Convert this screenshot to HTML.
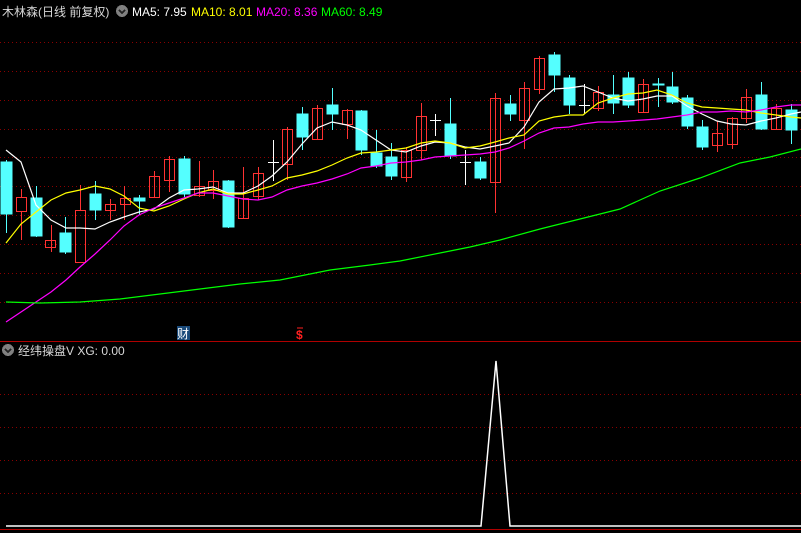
<!DOCTYPE html>
<html><head><meta charset="utf-8"><style>
html,body{margin:0;padding:0;background:#000;width:801px;height:533px;overflow:hidden}
svg{display:block}
text{font-family:"Liberation Sans","Noto Sans CJK SC",sans-serif;font-size:12px}
</style></head><body>
<svg width="801" height="533" viewBox="0 0 801 533" xmlns="http://www.w3.org/2000/svg" shape-rendering="crispEdges">
<rect width="801" height="533" fill="#000"/>
<g stroke="#8a0000" stroke-dasharray="1 3" stroke-width="1">
<line x1="0" y1="42.5" x2="801" y2="42.5"/><line x1="0" y1="71.5" x2="801" y2="71.5"/><line x1="0" y1="100.5" x2="801" y2="100.5"/><line x1="0" y1="129.5" x2="801" y2="129.5"/><line x1="0" y1="157.5" x2="801" y2="157.5"/><line x1="0" y1="186.5" x2="801" y2="186.5"/><line x1="0" y1="215.5" x2="801" y2="215.5"/><line x1="0" y1="244.5" x2="801" y2="244.5"/><line x1="0" y1="273.5" x2="801" y2="273.5"/><line x1="0" y1="302.5" x2="801" y2="302.5"/>
<line x1="0" y1="394.5" x2="801" y2="394.5"/><line x1="0" y1="427.5" x2="801" y2="427.5"/><line x1="0" y1="460.5" x2="801" y2="460.5"/><line x1="0" y1="493.5" x2="801" y2="493.5"/>
</g>
<line x1="0" y1="341.5" x2="801" y2="341.5" stroke="#b00000"/>
<line x1="0" y1="529.5" x2="801" y2="529.5" stroke="#b00000"/>

<g id="c" stroke-width="1">
<!-- cyan: x, bodyTop, bodyBot, wickTop, wickBot -->
<g fill="#54ffff" stroke="#54ffff">
<line x1="6.5" y1="160" x2="6.5" y2="233"/><rect x="1" y="162" width="11" height="52"/>
<line x1="36.5" y1="186" x2="36.5" y2="237"/><rect x="31" y="198" width="11" height="38"/>
<line x1="65.5" y1="217" x2="65.5" y2="254"/><rect x="60" y="233" width="11" height="19"/>
<line x1="95.5" y1="181" x2="95.5" y2="220"/><rect x="90" y="194" width="11" height="16"/>
<line x1="139.5" y1="195" x2="139.5" y2="215"/><rect x="134" y="198" width="11" height="3"/>
<line x1="184.5" y1="156" x2="184.5" y2="197"/><rect x="179" y="159" width="11" height="35"/>
<line x1="228.5" y1="180" x2="228.5" y2="228"/><rect x="223" y="181" width="11" height="46"/>
<line x1="302.5" y1="107" x2="302.5" y2="150"/><rect x="297" y="114" width="11" height="23"/>
<line x1="332.5" y1="88" x2="332.5" y2="130"/><rect x="327" y="105" width="11" height="9"/>
<line x1="361.5" y1="110" x2="361.5" y2="155"/><rect x="356" y="111" width="11" height="39"/>
<line x1="376.5" y1="130" x2="376.5" y2="168"/><rect x="371" y="153" width="11" height="13"/>
<line x1="391.5" y1="143" x2="391.5" y2="180"/><rect x="386" y="157" width="11" height="19"/>
<line x1="450.5" y1="98" x2="450.5" y2="159"/><rect x="445" y="124" width="11" height="32"/>
<line x1="480.5" y1="157" x2="480.5" y2="180"/><rect x="475" y="162" width="11" height="16"/>
<line x1="510.5" y1="95" x2="510.5" y2="121"/><rect x="505" y="104" width="11" height="10"/>
<line x1="554.5" y1="52" x2="554.5" y2="92"/><rect x="549" y="55" width="11" height="20"/>
<line x1="569.5" y1="75" x2="569.5" y2="114"/><rect x="564" y="78" width="11" height="27"/>
<line x1="613.5" y1="75" x2="613.5" y2="114"/><rect x="608" y="95" width="11" height="8"/>
<line x1="628.5" y1="72" x2="628.5" y2="108"/><rect x="623" y="78" width="11" height="27"/>
<line x1="658.5" y1="78" x2="658.5" y2="107"/><rect x="653" y="84" width="11" height="1"/>
<line x1="672.5" y1="72" x2="672.5" y2="104"/><rect x="667" y="87" width="11" height="15"/>
<line x1="687.5" y1="95" x2="687.5" y2="129"/><rect x="682" y="98" width="11" height="28"/>
<line x1="702.5" y1="120" x2="702.5" y2="150"/><rect x="697" y="127" width="11" height="20"/>
<line x1="761.5" y1="82" x2="761.5" y2="130"/><rect x="756" y="95" width="11" height="34"/>
<line x1="791.5" y1="104" x2="791.5" y2="144"/><rect x="786" y="110" width="11" height="20"/>
</g>
<g fill="none" stroke="#ff3232">
<line x1="21.5" y1="189" x2="21.5" y2="197"/><line x1="21.5" y1="212" x2="21.5" y2="240"/><rect x="16.5" y="197.5" width="10" height="14"/>
<line x1="51.5" y1="225" x2="51.5" y2="252"/><rect x="45.5" y="240.5" width="10" height="7"/>
<line x1="80.5" y1="185" x2="80.5" y2="210"/><rect x="75.5" y="210.5" width="10" height="52"/>
<line x1="110.5" y1="199" x2="110.5" y2="220"/><rect x="105.5" y="204.5" width="10" height="6"/>
<line x1="124.5" y1="186" x2="124.5" y2="220"/><rect x="120.5" y="198.5" width="10" height="6"/>
<line x1="154.5" y1="171" x2="154.5" y2="197"/><rect x="149.5" y="176.5" width="10" height="21"/>
<line x1="169.5" y1="156" x2="169.5" y2="192"/><rect x="164.5" y="159.5" width="10" height="21"/>
<line x1="199.5" y1="161" x2="199.5" y2="197"/><rect x="194.5" y="186.5" width="10" height="9"/>
<line x1="213.5" y1="170" x2="213.5" y2="199"/><rect x="208.5" y="181.5" width="10" height="9"/>
<line x1="243.5" y1="167" x2="243.5" y2="218"/><rect x="238.5" y="198.5" width="10" height="20"/>
<line x1="258.5" y1="167" x2="258.5" y2="200"/><rect x="253.5" y="173.5" width="10" height="23"/>
<line x1="287.5" y1="127" x2="287.5" y2="180"/><rect x="282.5" y="129.5" width="10" height="35"/>
<line x1="317.5" y1="105" x2="317.5" y2="140"/><rect x="312.5" y="108.5" width="10" height="31"/>
<line x1="347.5" y1="109" x2="347.5" y2="139"/><rect x="342.5" y="110.5" width="10" height="14"/>
<line x1="406.5" y1="147" x2="406.5" y2="182"/><rect x="401.5" y="150.5" width="10" height="27"/>
<line x1="421.5" y1="103" x2="421.5" y2="160"/><rect x="416.5" y="116.5" width="10" height="34"/>
<line x1="495.5" y1="93" x2="495.5" y2="213"/><rect x="490.5" y="98.5" width="10" height="84"/>
<line x1="524.5" y1="82" x2="524.5" y2="149"/><rect x="519.5" y="88.5" width="10" height="32"/>
<line x1="539.5" y1="56" x2="539.5" y2="94"/><rect x="534.5" y="58.5" width="10" height="31"/>
<line x1="598.5" y1="86" x2="598.5" y2="111"/><rect x="593.5" y="92.5" width="10" height="16"/>
<line x1="643.5" y1="79" x2="643.5" y2="113"/><rect x="638.5" y="84.5" width="10" height="28"/>
<line x1="717.5" y1="121" x2="717.5" y2="152"/><rect x="712.5" y="133.5" width="10" height="12"/>
<line x1="732.5" y1="117" x2="732.5" y2="149"/><rect x="727.5" y="118.5" width="10" height="26"/>
<line x1="746.5" y1="89" x2="746.5" y2="123"/><rect x="741.5" y="97.5" width="10" height="21"/>
<line x1="776.5" y1="104" x2="776.5" y2="130"/><rect x="771.5" y="108.5" width="10" height="21"/>
</g>
<g stroke="#fff">
<line x1="273.5" y1="140" x2="273.5" y2="181"/><line x1="268" y1="162.5" x2="279" y2="162.5"/>
<line x1="435.5" y1="114" x2="435.5" y2="136"/><line x1="430" y1="120.5" x2="441" y2="120.5"/>
<line x1="465.5" y1="150" x2="465.5" y2="185"/><line x1="460" y1="162.5" x2="471" y2="162.5"/>
<line x1="584.5" y1="84" x2="584.5" y2="114"/><line x1="579" y1="105.5" x2="590" y2="105.5"/>
</g>
</g>

<g fill="none" stroke-width="1.2" shape-rendering="auto">
<polyline stroke="#fff" points="6,150 21,162 36,205 51,220 66,228 80,228 95,229 110,222 124,217 139,212 154,209 169,198 184,190 198,189 213,187 228,193 243,193 258,186 272,176 287,162 302,144 317,128 332,122 347,125 361,130 376,140 391,150 406,152 421,146 435,142 450,143 465,147 480,149 495,146 509,143 524,127 539,102 554,89 569,88 583,86 598,92 613,98 628,101 643,99 657,96 672,96 687,106 702,114 717,121 731,124 746,125 761,121 776,118 791,114 801,112"/>
<polyline stroke="#ffff00" points="6,243 21,224 36,212 51,200 66,193 80,190 95,186 110,189 124,196 139,208 154,211 169,206 184,199 198,193 213,189 228,194 243,194 258,190 272,186 287,178 302,175 317,171 332,165 347,158 361,153 376,152 391,150 406,148 421,143 435,141 450,143 465,148 480,146 495,142 509,138 524,135 539,121 554,117 569,115 583,115 598,103 613,98 628,94 643,93 657,90 672,95 687,103 702,107 717,108 731,109 746,110 761,113 776,115 791,117 801,118"/>
<polyline stroke="#ff00ff" points="6,322 21,312 36,302 51,292 66,280 80,267 95,254 110,240 124,226 139,215 154,208 169,203 184,198 198,193 213,193 228,196 243,199 258,200 272,197 287,190 302,186 317,183 332,179 347,174 361,168 376,166 391,163 406,162 421,160 435,157 450,156 465,155 480,154 495,152 509,148 524,141 539,133 554,128 569,127 583,124 598,122 613,122 628,121 643,120 657,119 672,117 687,115 702,112 717,112 731,111 746,112 761,110 776,107 791,105 801,105"/>
<polyline stroke="#00ff00" points="6,302 40,303 80,302 120,299 160,294 200,289 240,284 280,280 300,276 330,270 370,265 400,261 440,253 470,247 500,240 540,229 580,219 620,209 660,191 700,178 740,163 770,157 801,149"/>
<polyline stroke="#fff" stroke-width="1.5" points="6,526 481,526 496,361 510,526 801,526"/>
</g>

<text x="2" y="16" fill="#d8d8d8" font-size="13">木林森(日线 前复权)</text>
<circle cx="122" cy="11" r="6" fill="#808080"/>
<path d="M119 10 L122 13 L125 10" stroke="#222" stroke-width="1.5" fill="none"/>
<text x="132" y="16" fill="#fff">MA5: 7.95</text>
<text x="191" y="16" fill="#ffff00">MA10: 8.01</text>
<text x="256" y="16" fill="#ff00ff">MA20: 8.36</text>
<text x="321" y="16" fill="#00ff00">MA60: 8.49</text>

<rect x="177" y="326" width="13" height="14" fill="#1a4a7a"/>
<text x="177" y="338" fill="#fff" font-size="12">财</text>
<text x="296" y="339" fill="#ff2020" font-size="12" font-weight="bold">$</text>
<line x1="297" y1="328" x2="303" y2="328" stroke="#ff2020"/>

<circle cx="8" cy="350" r="6" fill="#808080"/>
<path d="M5 349 L8 352 L11 349" stroke="#222" stroke-width="1.5" fill="none"/>
<text x="18" y="355" fill="#d8d8d8" font-size="13">经纬操盘V XG: 0.00</text>
</svg>
</body></html>
